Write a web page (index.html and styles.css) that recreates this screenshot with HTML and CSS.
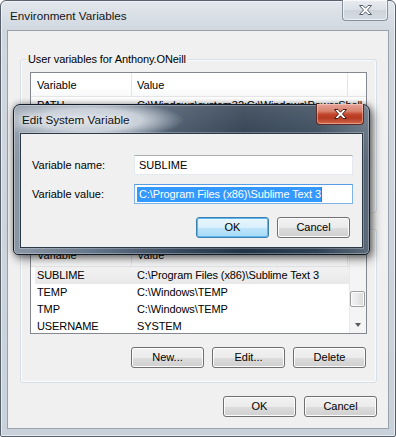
FILE: index.html
```html
<!DOCTYPE html>
<html>
<head>
<meta charset="utf-8">
<link rel="stylesheet" href="styles.css">
</head>
<body>
<div class="window">
  <div class="titlebar">
    <span class="title">Environment Variables</span>
    <div class="close close-inactive">
      <svg width="13" height="10" viewBox="0 0 13 10"><polygon points="0.5,0.5 4,0.5 6.5,3.2 9,0.5 12.5,0.5 8.5,5 12.5,9.5 9,9.5 6.5,6.8 4,9.5 0.5,9.5 4.5,5" fill="#fff" stroke="#56606c" stroke-width="1"/></svg>
    </div>
  </div>
  <div class="client">
    <div class="group">
      <div class="legend">User variables for Anthony.ONeill</div>
      <div class="list">
        <div class="main">
          <div class="header"><div class="hc c1">Variable</div><div class="hc c2">Value</div><div class="hc filler"></div></div>
          <div class="row"><div class="c1">PATH</div><div class="c2">C:\Windows\system32;C:\Windows\PowerShell</div></div>
          <div class="row obscured"><div class="c1">TEMP</div><div class="c2">%USERPROFILE%\AppData\Local\Temp</div></div>
          <div class="row obscured"><div class="c1">TMP</div><div class="c2">%USERPROFILE%\AppData\Local\Temp</div></div>
        </div>
      </div>
      <div class="btnrow obscured">
        <button class="btn">New...</button><button class="btn">Edit...</button><button class="btn">Delete</button>
      </div>
    </div>
    <div class="group group2">
      <div class="legend obscured">System variables</div>
      <div class="list">
        <div class="main">
          <div class="header"><div class="hc c1">Variable</div><div class="hc c2">Value</div><div class="hc filler"></div></div>
          <div class="row selected"><div class="c1">SUBLIME</div><div class="c2">C:\Program Files (x86)\Sublime Text 3</div></div>
          <div class="row"><div class="c1">TEMP</div><div class="c2">C:\Windows\TEMP</div></div>
          <div class="row"><div class="c1">TMP</div><div class="c2">C:\Windows\TEMP</div></div>
          <div class="row"><div class="c1">USERNAME</div><div class="c2">SYSTEM</div></div>
        </div>
        <div class="vscroll">
          <div class="sbtn"><span class="arrow-up"></span></div>
          <div class="track"><div class="thumb"></div></div>
          <div class="sbtn"><span class="arrow-down"></span></div>
        </div>
      </div>
      <div class="btnrow">
        <button class="btn">New...</button><button class="btn">Edit...</button><button class="btn">Delete</button>
      </div>
    </div>
    <div class="footer">
      <button class="btn">OK</button><button class="btn">Cancel</button>
    </div>
  </div>

  <div class="dialog">
    <div class="dtitlebar">
      <span class="dtitle">Edit System Variable</span>
      <div class="close close-active">
        <svg width="13" height="10" viewBox="0 0 13 10"><polygon points="0.5,0.5 4,0.5 6.5,3.2 9,0.5 12.5,0.5 8.5,5 12.5,9.5 9,9.5 6.5,6.8 4,9.5 0.5,9.5 4.5,5" fill="#fff" stroke="#4a1a12" stroke-width="1"/></svg>
      </div>
    </div>
    <div class="dclient">
      <div class="frow">
        <label class="flabel">Variable name:</label>
        <div class="input">SUBLIME</div>
      </div>
      <div class="frow frow2">
        <label class="flabel">Variable value:</label>
        <div class="input focused"><span class="sel">C:\Program Files (x86)\Sublime Text 3</span><span class="caret"></span></div>
      </div>
      <div class="dbtns">
        <button class="btn btn-default">OK</button><button class="btn">Cancel</button>
      </div>
    </div>
  </div>
</div>
</body>
</html>
```
FILE: styles.css
```css
html, body {
  margin: 0;
  padding: 0;
  background: #ffffff;
}
body {
  font-family: "Liberation Sans", Arial, sans-serif;
  font-size: 11px;
  color: #000;
  width: 396px;
  height: 437px;
  overflow: hidden;
}
.obscured {
  visibility: hidden;
}
.window {
  position: relative;
  width: 396px;
  height: 437px;
  box-sizing: border-box;
  border: 1px solid #58616b;
  border-radius: 6px 6px 2px 2px;
  background: linear-gradient(#e2e7ed 0, #d0d7df 30px, #c9d1da 100%);
  box-shadow: inset 0 0 0 1px rgba(255,255,255,0.55);
  padding: 0 6px 7px 6px;
  display: flex;
  flex-direction: column;
}
.titlebar {
  height: 29px;
  display: flex;
  justify-content: space-between;
  align-items: flex-start;
}
.title {
  font-size: 11.7px;
  line-height: 30px;
  padding-left: 3px;
  color: #151515;
}
.close {
  display: flex;
  align-items: center;
  justify-content: center;
  box-sizing: border-box;
  border-radius: 0 0 4px 4px;
}
.close-inactive {
  width: 46px;
  height: 21px;
  margin-top: -1px;
  margin-right: 1px;
  border: 1px solid #87919c;
  border-top: none;
  background: linear-gradient(#e9edf1 0%, #d9dfe5 50%, #ccd3db 51%, #d5dce3 100%);
  box-shadow: inset 0 0 0 1px rgba(255,255,255,0.6);
}
.client {
  height: 399px;
  box-sizing: border-box;
  border: 1px solid #97a2ad;
  background: #f0f0f0;
  padding: 28px 11px 11px 12px;
  display: flex;
  flex-direction: column;
}
.group {
  border: 1px solid #d5dfe5;
  border-radius: 3px;
  box-shadow: inset 0 0 0 1px #fbfbfb;
  padding: 0 9px 14px 9px;
  display: flex;
  flex-direction: column;
}
.group2 {
  margin-top: 16px;
}
.legend {
  align-self: flex-start;
  margin: -8px 0 5px -4px;
  padding: 0 2px;
  background: #f0f0f0;
  line-height: 15px;
  letter-spacing: -0.1px;
}
.list {
  height: 92px;
  box-sizing: border-box;
  border: 1px solid #828790;
  background: #fff;
  display: flex;
  overflow: hidden;
}
.main {
  flex: 1;
  min-width: 0;
  display: flex;
  flex-direction: column;
  overflow: hidden;
}
.header {
  height: 24px;
  flex: none;
  display: flex;
  box-sizing: border-box;
  border-bottom: 1px solid #e5e5e5;
  background: linear-gradient(#ffffff 0%, #ffffff 60%, #f7f8f9 100%);
}
.hc {
  box-sizing: border-box;
  border-right: 1px solid #e5e5e5;
  line-height: 24px;
  white-space: nowrap;
  overflow: hidden;
}
.hc.c1 { width: 101px; padding-left: 6px; }
.hc.c2 { width: 216px; padding-left: 5px; }
.hc.filler { flex: 1; border-right: none; }
.row {
  display: flex;
  flex: none;
  height: 17px;
  line-height: 17px;
  margin-left: 4px;
  white-space: nowrap;
  letter-spacing: -0.1px;
}
.row .c1 { width: 97px; padding-left: 2px; box-sizing: border-box; overflow: hidden; }
.row .c2 { flex: 1; padding-left: 5px; overflow: hidden; }
.row.selected {
  background: linear-gradient(#f3f3f3, #e8e8e8);
}
.vscroll {
  width: 17px;
  flex: none;
  display: flex;
  flex-direction: column;
  background: #f4f4f4;
  box-sizing: border-box;
  border-left: 1px solid #e8e8e8;
}
.sbtn {
  height: 17px;
  flex: none;
  display: flex;
  align-items: center;
  justify-content: center;
}
.arrow-up, .arrow-down {
  width: 0;
  height: 0;
  border-left: 3.5px solid transparent;
  border-right: 3.5px solid transparent;
}
.arrow-down { border-top: 4px solid #5a5a5a; }
.arrow-up { border-bottom: 4px solid #5a5a5a; }
.track {
  flex: 1;
  display: flex;
  flex-direction: column;
  justify-content: flex-end;
  padding-bottom: 9px;
}
.thumb {
  height: 16px;
  margin: 0 1px 0 0;
  box-sizing: border-box;
  border: 1px solid #9e9e9e;
  border-radius: 2px;
  background: linear-gradient(90deg, #f3f3f3 0%, #e8e8e8 50%, #d9d9d9 100%);
  box-shadow: inset 0 0 0 1px #fbfbfb;
}
.btnrow {
  display: flex;
  justify-content: flex-end;
  gap: 8px;
  margin-top: 13px;
  padding-right: 1px;
}
.btn {
  width: 73px;
  height: 21px;
  box-sizing: border-box;
  border: 1px solid #707070;
  border-radius: 3px;
  background: linear-gradient(#f2f2f2 0%, #ebebeb 50%, #dddddd 51%, #cfcfcf 100%);
  box-shadow: inset 0 0 0 1px #fcfcfc;
  font-family: inherit;
  font-size: 11px;
  color: #000;
  padding: 0;
  margin: 0;
  line-height: 19px;
}
.footer {
  display: flex;
  justify-content: flex-end;
  gap: 8px;
  margin-top: 13px;
}
/* dialog */
.dialog {
  position: absolute;
  left: 12px;
  top: 103px;
  width: 357px;
  height: 151px;
  box-sizing: border-box;
  border: 1px solid #121c28;
  border-radius: 7px 7px 5px 5px;
  padding: 0 6px 6px 6px;
  display: flex;
  flex-direction: column;
  background:
    radial-gradient(ellipse 95px 20px at 75px 15px, rgba(214,220,227,1) 0%, rgba(205,212,220,0.95) 55%, rgba(205,212,220,0) 100%),
    linear-gradient(180deg, rgba(255,255,255,0.18) 0%, rgba(255,255,255,0) 40%),
    linear-gradient(90deg, #8a97a5 0%, #66768a 22%, #3b4b5f 45%, #233346 65%, #2f4053 85%, #5d6b7b 100%);
  box-shadow: 3px 4px 10px rgba(0,0,0,0.5), 0 0 6px rgba(0,0,0,0.35), inset 0 0 0 1px rgba(255,255,255,0.3);
}
.dtitlebar {
  height: 28px;
  flex: none;
  display: flex;
  justify-content: space-between;
  align-items: flex-start;
}
.dtitle {
  font-size: 11.7px;
  line-height: 29px;
  padding-left: 2px;
  color: #111;
  text-shadow: 0 0 6px #fff, 0 0 10px rgba(255,255,255,0.8);
}
.close-active {
  width: 48px;
  height: 21px;
  margin-top: -1px;
  margin-right: -1px;
  border: 1px solid #5b2a22;
  border-top: none;
  background: linear-gradient(#e7a496 0%, #d8836f 35%, #c2442a 52%, #b53a22 70%, #d0684c 100%);
  box-shadow: inset 0 0 0 1px rgba(255,220,210,0.45);
}
.dclient {
  height: 115px;
  flex: none;
  box-sizing: border-box;
  border: 1px solid #2c3a48;
  background: #f0f0f0;
  padding: 21px 9px 0 11px;
  display: flex;
  flex-direction: column;
  box-shadow: 0 0 0 1px rgba(255,255,255,0.25);
}
.frow {
  display: flex;
  align-items: center;
}
.frow2 { margin-top: 9px; }
.flabel {
  width: 102px;
  flex: none;
}
.input {
  width: 219px;
  height: 20px;
  box-sizing: border-box;
  border: 1px solid #e3e9ef;
  border-top-color: #abadb3;
  background: #fff;
  padding-left: 4px;
  line-height: 18px;
  white-space: nowrap;
  overflow: hidden;
  display: flex;
  align-items: center;
}
.input.focused {
  border-color: #7eb4ea;
  border-top-color: #569de5;
  padding-left: 2px;
}
.sel {
  background: #3399ff;
  color: #fff;
  line-height: 15px;
  padding-left: 2px;
  letter-spacing: -0.1px;
}
.caret {
  width: 1px;
  height: 15px;
  background: #b85a10;
}
.dbtns {
  display: flex;
  justify-content: flex-end;
  gap: 8px;
  margin-top: 13px;
  margin-right: 3px;
}
.btn-default {
  border-color: #3c7fb1;
  background: linear-gradient(#eaf6fd 0%, #d9f0fc 50%, #bee6fd 51%, #a7d9f5 100%);
  box-shadow: inset 0 0 0 1px #5cb7f0;
}
```
